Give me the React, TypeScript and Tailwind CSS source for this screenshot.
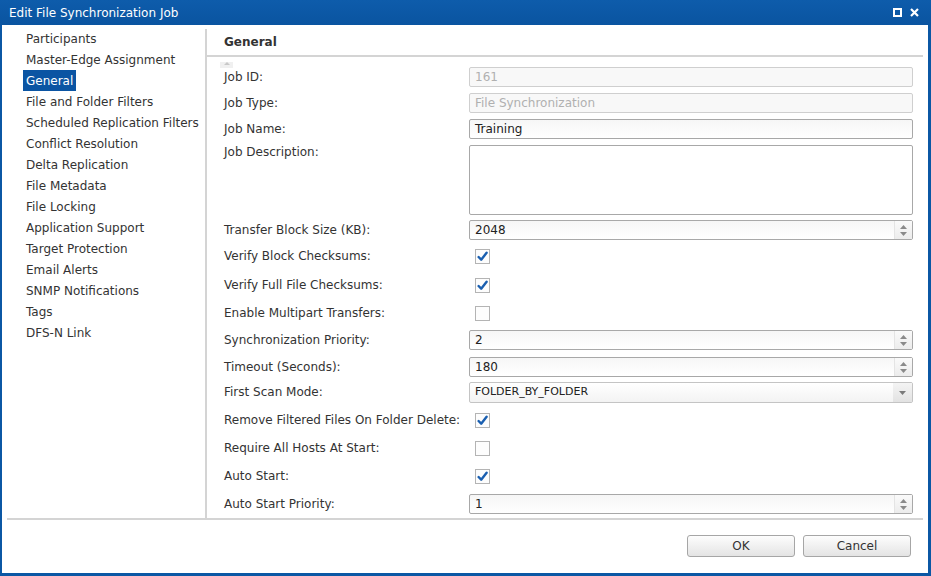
import React from "react";

const font = { fontFamily: '"DejaVu Sans", Verdana, sans-serif' };

const navItems = [
  "Participants",
  "Master-Edge Assignment",
  "General",
  "File and Folder Filters",
  "Scheduled Replication Filters",
  "Conflict Resolution",
  "Delta Replication",
  "File Metadata",
  "File Locking",
  "Application Support",
  "Target Protection",
  "Email Alerts",
  "SNMP Notifications",
  "Tags",
  "DFS-N Link",
];

function Check({ checked }: { checked: boolean }) {
  return (
    <div className="w-[15px] h-[15px] border border-[#b4b4b4] bg-[#fdfdfd] flex items-center justify-center">
      {checked && (
        <svg width="11" height="11" viewBox="0 0 11 11">
          <path d="M1.6 6 L4.2 8.7 L9.6 1.8" fill="none" stroke="#1a5fb0" strokeWidth="2.4" strokeLinecap="round" strokeLinejoin="round" />
        </svg>
      )}
    </div>
  );
}

function Spinner() {
  return (
    <div className="w-[18px] h-full flex flex-col items-center justify-center gap-[3px] bg-gradient-to-b from-[#fafafa] to-[#ececec] border-l border-[#e4e4e4]">
      <svg width="7" height="4" viewBox="0 0 7 4"><path d="M0 4 L3.5 0 L7 4 Z" fill="#8a8a8a" /></svg>
      <svg width="7" height="4" viewBox="0 0 7 4"><path d="M0 0 L3.5 4 L7 0 Z" fill="#8a8a8a" /></svg>
    </div>
  );
}

function TextBox({ value, disabled, spin, h = "h-[20px]" }: { value: string; disabled?: boolean; spin?: boolean; h?: string }) {
  return (
    <div
      className={`flex-1 ${h} flex items-stretch rounded-[2px] border ${
        disabled ? "border-[#cfcfcf] bg-[#f8f8f8] text-[#b0b0b0]" : "border-[#a8a8a8] bg-gradient-to-b from-[#f6f6f6] to-white text-[#222]"
      }`}
    >
      <div className="flex-1 flex items-center pl-[5px] text-[12px]">{value}</div>
      {spin && <Spinner />}
    </div>
  );
}

function Row({ label, children, mt, h = "h-[20px]", top }: { label: string; children: React.ReactNode; mt: string; h?: string; top?: boolean }) {
  return (
    <div className={`flex ${top ? "items-start" : "items-center"} ${mt} ${h}`}>
      <div className="w-[245px] text-[12px] text-[#333] leading-[15px]">{label}</div>
      {children}
    </div>
  );
}

export default function App() {
  return (
    <div className="w-[931px] h-[576px] bg-[#0b57a4] flex flex-col" style={font}>
      <div className="h-[25px] flex items-center justify-between pl-[9px] pr-[12px] bg-gradient-to-b from-[#0e5cab] to-[#0a54a0] text-white text-[12px]">
        <span>Edit File Synchronization Job</span>
        <div className="flex items-center gap-[8px]">
          <div className="w-[9px] h-[9px] border-[2px] border-white"></div>
          <svg width="9" height="9" viewBox="0 0 9 9">
            <path d="M1 1 L8 8 M8 1 L1 8" stroke="white" strokeWidth="2.2" />
          </svg>
        </div>
      </div>
      <div className="flex-1 bg-white ml-[2px] mr-[3px] mb-[3px] flex flex-col">
        <div className="flex mx-[5px] mt-[4px] h-[491px] border-b-2 border-[#d4d4d4]">
          <div className="w-[198px] pl-[16px] -mt-[1px]">
            {navItems.map((n) => (
              <div key={n} className="h-[21px] flex items-center">
                <span
                  className={`px-[3px] h-[21px] flex items-center text-[12px] ${
                    n === "General" ? "bg-[#0b55a3] text-white" : "text-[#333]"
                  }`}
                >
                  {n}
                </span>
              </div>
            ))}
          </div>
          <div className="w-[2px] bg-[#d4d4d4]"></div>
          <div className="flex-1 flex flex-col">
            <div className="h-[28px] flex items-center pl-[17px] text-[12px] font-bold text-[#333] border-b-2 border-[#d4d4d4]">
              General
            </div>
            <div className="relative pl-[17px] pr-[10px] pt-[10px] flex flex-col">
              <div className="absolute left-[13px] top-[5px] w-[13px] h-[6px] bg-[#f0f0f0] flex items-start justify-center">
                <svg width="6" height="3" viewBox="0 0 6 3"><path d="M0 3 L3 0 L6 3 Z" fill="#c8c8c8" /></svg>
              </div>
              <Row label="Job ID:" mt="mt-0">
                <TextBox value="161" disabled />
              </Row>
              <Row label="Job Type:" mt="mt-[6px]">
                <TextBox value="File Synchronization" disabled />
              </Row>
              <Row label="Job Name:" mt="mt-[6px]">
                <TextBox value="Training" />
              </Row>
              <Row label="Job Description:" mt="mt-[6px]" h="h-[70px]" top>
                <div className="flex-1 h-[70px] rounded-[2px] border border-[#a8a8a8] bg-white"></div>
              </Row>
              <Row label="Transfer Block Size (KB):" mt="mt-[5px]">
                <TextBox value="2048" spin />
              </Row>
              <Row label="Verify Block Checksums:" mt="mt-[9px]" h="h-[15px]">
                <div className="ml-[6px]"><Check checked /></div>
              </Row>
              <Row label="Verify Full File Checksums:" mt="mt-[14px]" h="h-[15px]">
                <div className="ml-[6px]"><Check checked /></div>
              </Row>
              <Row label="Enable Multipart Transfers:" mt="mt-[13px]" h="h-[15px]">
                <div className="ml-[6px]"><Check checked={false} /></div>
              </Row>
              <Row label="Synchronization Priority:" mt="mt-[9px]">
                <TextBox value="2" spin />
              </Row>
              <Row label="Timeout (Seconds):" mt="mt-[7px]">
                <TextBox value="180" spin />
              </Row>
              <Row label="First Scan Mode:" mt="mt-[5px]" h="h-[21px]">
                <div className="flex-1 h-[21px] flex items-stretch rounded-[2px] border border-[#c4c4c4] bg-gradient-to-b from-white to-[#f3f3f3]">
                  <div className="flex-1 flex items-center pl-[5px] text-[11px] text-[#222]">FOLDER_BY_FOLDER</div>
                  <div className="w-[19px] flex items-center justify-center bg-gradient-to-b from-[#f4f4f4] to-[#e2e2e2]">
                    <svg width="7" height="4" viewBox="0 0 7 4"><path d="M0 0 L3.5 4 L7 0 Z" fill="#7a7a7a" /></svg>
                  </div>
                </div>
              </Row>
              <Row label="Remove Filtered Files On Folder Delete:" mt="mt-[10px]" h="h-[15px]">
                <div className="ml-[6px]"><Check checked /></div>
              </Row>
              <Row label="Require All Hosts At Start:" mt="mt-[13px]" h="h-[15px]">
                <div className="ml-[6px]"><Check checked={false} /></div>
              </Row>
              <Row label="Auto Start:" mt="mt-[13px]" h="h-[15px]">
                <div className="ml-[6px]"><Check checked /></div>
              </Row>
              <Row label="Auto Start Priority:" mt="mt-[10px]">
                <TextBox value="1" spin />
              </Row>
            </div>
          </div>
        </div>
        <div className="flex justify-end gap-[8px] pr-[17px] pt-[15px]">
          {["OK", "Cancel"].map((b) => (
            <div
              key={b}
              className="w-[108px] h-[22px] flex items-center justify-center rounded-[3px] border border-[#a6a6a6] bg-gradient-to-b from-[#fdfdfd] to-[#e4e4e4] text-[12px] text-[#333]"
            >
              {b}
            </div>
          ))}
        </div>
      </div>
    </div>
  );
}
